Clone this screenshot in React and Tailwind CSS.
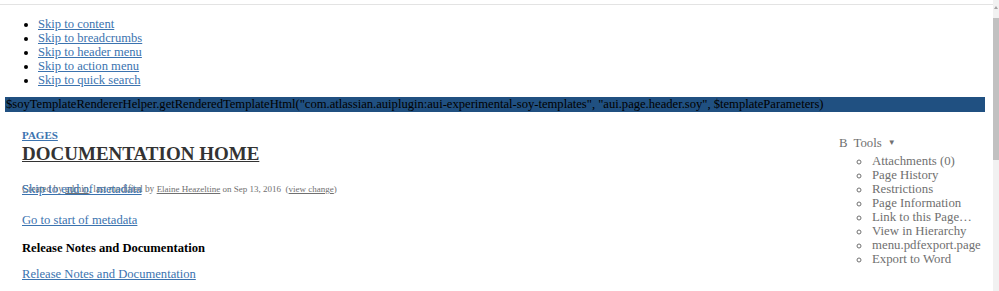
const skipLinks = [
  'Skip to content',
  'Skip to breadcrumbs',
  'Skip to header menu',
  'Skip to action menu',
  'Skip to quick search',
];

const tools = [
  'Attachments (0)',
  'Page History',
  'Restrictions',
  'Page Information',
  'Link to this Page…',
  'View in Hierarchy',
  'menu.pdfexport.page',
  'Export to Word',
];

const linkCls = 'text-[#3b73af] underline';

export default function App() {
  return (
    <div className="relative h-[291px] w-[999px] overflow-hidden bg-white font-['Liberation_Serif','Times_New_Roman',serif] text-[12.6px] leading-[14px] text-black">
      {/* page area */}
      <div className="mr-[6px]">
        <div className="h-[4px]" />
        <div className="border-t border-[#e3e3e3]" />

        {/* skip links */}
        <ul className="mt-[12px] list-disc pl-[38px]">
          {skipLinks.map((s) => (
            <li key={s}>
              <a href="#" className={linkCls}>{s}</a>
            </li>
          ))}
        </ul>

        {/* unrendered template call */}
        <div className="mt-[10px] ml-[5px] mr-[8px] h-[15px] bg-[#205081] pl-[1px] leading-[15px] text-black whitespace-nowrap">
          $soyTemplateRendererHelper.getRenderedTemplateHtml("com.atlassian.auiplugin:aui-experimental-soy-templates", "aui.page.header.soy", $templateParameters)
        </div>

        <div className="flex items-start">
          {/* main column */}
          <div className="flex-1 pl-[22px]">
            <div className="mt-[17px] text-[11px] font-bold leading-[12px]">
              <a href="#" className={linkCls}>PAGES</a>
            </div>
            <h1 className="mt-[1px] text-[19px] font-bold leading-[24px] text-[#333] underline">
              DOCUMENTATION HOME
            </h1>

            <div className="relative mt-[16px] h-[14px] text-[9px] leading-[14px] text-[#707070] whitespace-nowrap">
              <span>
                <span className="text-[9.4px]">
                  Created by <a href="#" className="underline">admin</a>, last modified by{' '}
                </span>
                <a href="#" className="underline">Elaine Heazeltine</a> on Sep 13, 2016&nbsp; (
                <a href="#" className="underline">view change</a>)
              </span>
              <a href="#" className={`absolute left-0 top-0 text-[12.6px] ${linkCls}`}>
                Skip to end of metadata
              </a>
            </div>

            <div className="mt-[17px]">
              <a href="#" className={linkCls}>Go to start of metadata</a>
            </div>
            <div className="mt-[14px] font-bold">Release Notes and Documentation</div>
            <div className="mt-[12px]">
              <a href="#" className={linkCls}>Release Notes and Documentation</a>
            </div>
          </div>

          {/* tools menu */}
          <div className="w-[154px] pt-[24px] text-[12.8px] text-[#707070]">
            <div className="flex items-center">
              <span>B</span>
              <span className="ml-[6px]">Tools</span>
              <span className="ml-[6px] text-[8px]">▼</span>
            </div>
            <ul className="mt-[4px] list-[circle] pl-[32px]">
              {tools.map((t) => (
                <li key={t} className="pl-[1px]">{t}</li>
              ))}
            </ul>
          </div>
        </div>
      </div>

      {/* scrollbar */}
      <div className="absolute right-0 top-0 flex h-full w-[6px] flex-col bg-[#f1f1f1]">
        <div className="h-[6px]" />
        <div className="mx-auto h-0 w-0 border-x-[2px] border-b-[3px] border-x-transparent border-b-[#a3a3a3]" />
        <div className="mt-[9px] h-[142px] w-full bg-[#c1c1c1]" />
      </div>
    </div>
  );
}
